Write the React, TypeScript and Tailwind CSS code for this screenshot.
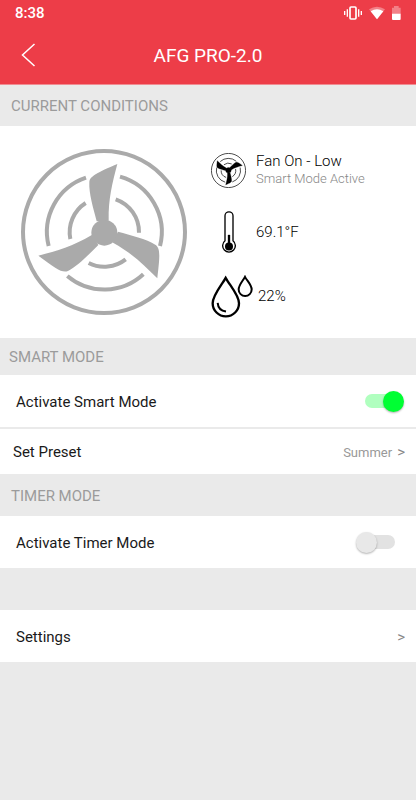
import { useState } from "react";
import type { ReactNode } from "react";

const BLADE =
  "M260 244C250 205 236 160 238 126C240 108 262 98 322 72C307 130 295 175 296 242Z";

function FanIcon({ className, ring = 12, edge = 0 }: { className: string; ring?: number; edge?: number }) {
  return (
    <svg viewBox="33 27 498 498" className={className} aria-hidden="true">
      <g fill="none" stroke="currentColor" strokeWidth={ring}>
        <circle cx="282" cy="276" r="243" />
        <path d="M228 113A172 172 0 0 0 116 318" />
        <path d="M330 110A172 172 0 0 1 450 318" />
        <path d="M172 408A172 172 0 0 0 400 403" />
        <path d="M227 189A104 104 0 0 0 181 297" />
        <path d="M317 178A104 104 0 0 1 387 278" />
        <path d="M236 369A104 104 0 0 0 347 358" />
      </g>
      <g fill="currentColor" stroke="currentColor" strokeWidth={edge}>
        <circle cx="283" cy="278" r="39" />
        <path d={BLADE} />
        <path d={BLADE} transform="rotate(120 283 278)" />
        <path d={BLADE} transform="rotate(240 283 278)" />
      </g>
    </svg>
  );
}

function ThermometerIcon() {
  return (
    <svg viewBox="0 0 42 128" className="h-[43px] w-[14px]" aria-hidden="true">
      <path
        d="M9 89V14a12 12 0 0 1 24 0v75a19 19 0 1 1-24 0Z"
        fill="none"
        stroke="#000"
        strokeWidth="4"
      />
      <circle cx="21" cy="106" r="12" />
      <path d="M21 106V71" stroke="#000" strokeWidth="7" />
    </svg>
  );
}

function DropsIcon() {
  return (
    <svg viewBox="0 0 126 128" className="h-[43px] w-[42px]" fill="none" stroke="#000" aria-hidden="true">
      <path d="M44 8C32 30 5 60 5 84a39 39 0 0 0 79 0C84 60 56 30 44 8Z" strokeWidth="7" />
      <path d="M20 83c1 14 11 24 25 26" strokeWidth="6" />
      <path d="M102 5c-6 12-19 24-19 38a19 19 0 0 0 39 0c0-14-14-26-20-38Z" strokeWidth="6" />
    </svg>
  );
}

function StatusIcons() {
  return (
    <div className="flex items-center gap-[7px]">
      <svg viewBox="0 0 54 42" className="h-[14px] w-[18px]" fill="none" stroke="#fff" aria-hidden="true">
        <rect x="18" y="3" width="18" height="36" rx="3" strokeWidth="5" />
        <path d="M10 10v22M44 10v22" strokeWidth="4" />
        <path d="M2 15v12M52 15v12" strokeWidth="4" />
      </svg>
      <svg viewBox="0 0 48 42" className="h-[14px] w-4" fill="#fff" aria-hidden="true">
        <path d="M0 10Q24-6 48 10L24 40Z" opacity=".35" />
        <path d="M5 16Q24 4 43 16L24 40Z" />
      </svg>
      <svg viewBox="0 0 27 42" className="h-[14px] w-[9px]" fill="#fff" aria-hidden="true">
        <path d="M0 24V5h6V0h14v5h6v19Z" opacity=".35" />
        <path d="M0 23h26v16q0 3-3 3H3q-3 0-3-3Z" />
      </svg>
    </div>
  );
}

function Section({ children, className }: { children: ReactNode; className: string }) {
  return (
    <h2 className={`flex items-center pt-[2px] text-[15px] text-[#9b9b9b] ${className}`}>{children}</h2>
  );
}

function Toggle({ id, on, onChange }: { id: string; on: boolean; onChange: () => void }) {
  return (
    <span className="grid h-[21px] w-[39px] items-center">
      <span
        className={`col-start-1 row-start-1 h-[14px] w-[35px] rounded-full ${
          on ? "justify-self-start bg-[#b0ffbf]" : "justify-self-end bg-[#e2e2e2]"
        }`}
      />
      <input
        id={id}
        type="checkbox"
        role="switch"
        checked={on}
        onChange={onChange}
        className="col-start-1 row-start-1 flex h-[21px] w-[39px] cursor-pointer appearance-none after:size-[21px] after:rounded-full after:bg-[#e8e8e8] after:shadow-[0_1px_2px_rgba(0,0,0,0.3)] checked:justify-end checked:after:bg-[#00ff33]"
      />
    </span>
  );
}

export default function App() {
  const [smart, setSmart] = useState(true);
  const [timer, setTimer] = useState(false);

  return (
    <div className="min-h-screen bg-[#eaeaea] font-['Roboto',sans-serif] text-[15px] text-[#1a1a1a]">
      <header className="border-b border-[#f08c92] bg-[#ed3d48] text-white">
        <div className="flex h-[26px] items-center justify-between px-[15px]">
          <span className="text-[15px] font-medium">8:38</span>
          <StatusIcons />
        </div>
        <div className="grid h-[58px] grid-cols-[56px_1fr_56px] items-center">
          <button aria-label="Back" className="flex h-full items-center pl-[21px]">
            <svg viewBox="0 0 15 24" className="h-6 w-[15px]" fill="none" stroke="#fff" strokeWidth="1.5" aria-hidden="true">
              <path d="M13.5 1L1.5 12l12 11" />
            </svg>
          </button>
          <h1 className="pt-[2px] text-center text-[19px]">AFG PRO-2.0</h1>
        </div>
      </header>

      <Section className="h-[41px] pl-[11px]">CURRENT CONDITIONS</Section>
      <div className="flex h-[212px] items-center bg-white pl-[21px]">
        <FanIcon className="size-[166px] shrink-0 text-[#aaa]" />
        <div className="ml-6 flex flex-col gap-[21px] pt-[6px] font-light text-black">
          <div className="flex items-center gap-[10px]">
            <FanIcon className="size-[35px] rotate-180 text-black" ring={10} edge={4} />
            <div className="leading-[18px]">
              <p>Fan On - Low</p>
              <p className="text-[13px] text-[#888]">Smart Mode Active</p>
            </div>
          </div>
          <div className="flex items-center gap-[10px] pt-[2px]">
            <div className="flex w-[35px] justify-center">
              <ThermometerIcon />
            </div>
            <p>69.1°F</p>
          </div>
          <div className="flex items-center gap-[5px]">
            <DropsIcon />
            <p>22%</p>
          </div>
        </div>
      </div>

      <Section className="h-[37px] pl-[9px]">SMART MODE</Section>
      <div className="flex h-[52px] items-center justify-between bg-white pr-3 pl-4">
        <label htmlFor="smart" className="pt-[2px]">Activate Smart Mode</label>
        <Toggle id="smart" on={smart} onChange={() => setSmart(!smart)} />
      </div>
      <button className="mt-[2px] flex h-[45px] w-full items-center justify-between bg-white pt-[2px] pr-[11px] pl-[13px]">
        <span>Set Preset</span>
        <span className="flex items-center gap-[5px] text-[13px] text-[#999]">
          Summer <span className="text-[15px] text-[#888]">&gt;</span>
        </span>
      </button>

      <Section className="h-[42px] pl-[11px]">TIMER MODE</Section>
      <div className="flex h-[52px] items-center justify-between bg-white pr-[21px] pl-4">
        <label htmlFor="timer" className="pt-[2px]">Activate Timer Mode</label>
        <Toggle id="timer" on={timer} onChange={() => setTimer(!timer)} />
      </div>

      <button className="mt-[42px] flex h-[52px] w-full items-center justify-between bg-white pt-[2px] pr-[11px] pl-4">
        <span>Settings</span>
        <span className="text-[#888]">&gt;</span>
      </button>
    </div>
  );
}
